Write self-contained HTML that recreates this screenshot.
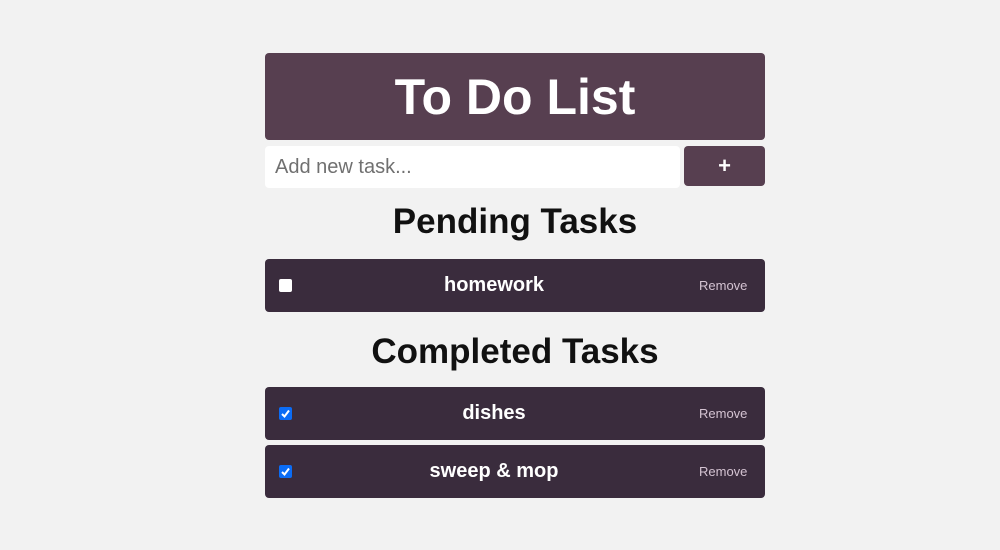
<!DOCTYPE html>
<html><head><style>
body{margin:0;background:#f2f2f2;font-family:"Liberation Sans",Arial,sans-serif;width:1000px;height:550px;position:relative;overflow:hidden}
.hdr{position:absolute;left:265px;top:53px;width:500px;height:87px;background:#573f50;border-radius:4px;color:#fff;font-weight:bold;font-size:50px;text-align:center;line-height:89px}
.inp{position:absolute;left:265px;top:146px;width:415px;height:42px;background:#fff;border-radius:4px;font-size:20px;color:#707070;line-height:42px;box-sizing:border-box;padding-left:10px}
.btn{position:absolute;left:684px;top:146px;width:81px;height:40px;background:#573f50;border-radius:4px;color:#fff;font-weight:bold;font-size:22px;text-align:center;line-height:40px}
h2{position:absolute;left:265px;width:500px;margin:0;text-align:center;font-size:35px;color:#111;font-weight:bold}
.row{position:absolute;left:265px;width:500px;height:53px;background:#3a2c3d;border-radius:4px;color:#fff}
.row .t{position:absolute;left:0;width:458px;text-align:center;font-weight:bold;font-size:20px;line-height:53px}
.row .r{position:absolute;left:434px;font-size:13px;color:#d4c3d2;line-height:53px}
.cb{position:absolute;left:14px;top:20px;width:13px;height:13px;border-radius:2px;background:#fff}
.cb.on{background:#0b6cf5}
.cb.on svg{position:absolute;left:0;top:0}
</style></head><body>
<div class="hdr">To Do List</div>
<div class="inp">Add new task...</div>
<div class="btn">+</div>
<h2 style="top:202px">Pending Tasks</h2>
<div class="row" style="top:259px"><div class="cb"></div><div class="t">homework</div><div class="r">Remove</div></div>
<h2 style="top:332px">Completed Tasks</h2>
<div class="row" style="top:387px"><div class="cb on"><svg width="13" height="13"><path d="M3 7 L5.5 9.5 L10 3.5" stroke="#fff" stroke-width="2" fill="none"/></svg></div><div class="t">dishes</div><div class="r">Remove</div></div>
<div class="row" style="top:445px"><div class="cb on"><svg width="13" height="13"><path d="M3 7 L5.5 9.5 L10 3.5" stroke="#fff" stroke-width="2" fill="none"/></svg></div><div class="t">sweep &amp; mop</div><div class="r">Remove</div></div>
</body></html>
